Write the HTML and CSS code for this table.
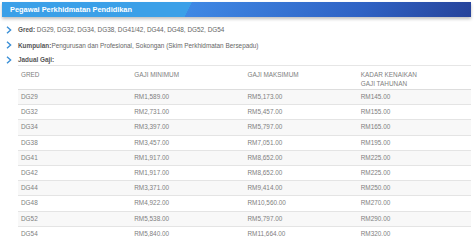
FILE: index.html
```html
<!DOCTYPE html>
<html>
<head>
<meta charset="utf-8">
<link rel="stylesheet" href="styles.css">
</head>
<body>
<div class="panel">
  <div class="title">Pegawai Perkhidmatan Pendidikan</div>
  <ul class="info">
    <li><svg class="chev" viewBox="0 0 6 8"><path d="M1 0.8 L4.6 4 L1 7.2" /></svg><b>Gred:</b>&nbsp;DG29, DG32, DG34, DG38, DG41/42, DG44, DG48, DG52, DG54</li>
    <li><svg class="chev" viewBox="0 0 6 8"><path d="M1 0.8 L4.6 4 L1 7.2" /></svg><b>Kumpulan:</b>Pengurusan dan Profesional, Sokongan (Skim Perkhidmatan Bersepadu)</li>
    <li class="last"><svg class="chev" viewBox="0 0 6 8"><path d="M1 0.8 L4.6 4 L1 7.2" /></svg><b>Jadual Gaji:</b></li>
  </ul>
  <table class="gaji">
    <thead>
      <tr><th>GRED</th><th>GAJI MINIMUM</th><th>GAJI MAKSIMUM</th><th>KADAR KENAIKAN<br>GAJI TAHUNAN</th></tr>
    </thead>
    <tbody>
      <tr><td>DG29</td><td>RM1,589.00</td><td>RM5,173.00</td><td>RM145.00</td></tr>
      <tr><td>DG32</td><td>RM2,731.00</td><td>RM5,457.00</td><td>RM155.00</td></tr>
      <tr><td>DG34</td><td>RM3,397.00</td><td>RM5,797.00</td><td>RM165.00</td></tr>
      <tr><td>DG38</td><td>RM3,457.00</td><td>RM7,051.00</td><td>RM195.00</td></tr>
      <tr><td>DG41</td><td>RM1,917.00</td><td>RM8,652.00</td><td>RM225.00</td></tr>
      <tr><td>DG42</td><td>RM1,917.00</td><td>RM8,652.00</td><td>RM225.00</td></tr>
      <tr><td>DG44</td><td>RM3,371.00</td><td>RM9,414.00</td><td>RM250.00</td></tr>
      <tr><td>DG48</td><td>RM4,922.00</td><td>RM10,560.00</td><td>RM270.00</td></tr>
      <tr><td>DG52</td><td>RM5,538.00</td><td>RM5,797.00</td><td>RM290.00</td></tr>
      <tr><td>DG54</td><td>RM5,840.00</td><td>RM11,664.00</td><td>RM320.00</td></tr>
    </tbody>
  </table>
</div>
</body>
</html>
```
FILE: styles.css
```css
html, body {
  margin: 0;
  padding: 0;
  background: #fff;
}
body {
  font-family: "Liberation Sans", Arial, sans-serif;
  color: #777;
}
.panel {
  padding: 2px 3px 0 2px;
}
.title {
  height: 15px;
  line-height: 15px;
  padding-left: 8px;
  color: #fff;
  font-weight: bold;
  font-size: 7.4px;
  background: linear-gradient(115deg, #3ba0e8 0 172px, #3f88e4 172px, #2f62c4 330px, #27439a 100%);
  box-shadow: 0 2px 3px rgba(0, 0, 0, 0.25);
}
.info {
  list-style: none;
  margin: 0;
  padding: 5px 0 0 0;
}
.info li {
  display: flex;
  align-items: center;
  height: 15.5px;
  font-size: 6.4px;
  color: #666;
  padding-left: 4px;
}
.info li.last {
  height: 12px;
  align-items: flex-start;
  padding-top: 3px;
  box-sizing: border-box;
}
.info b {
  color: #555;
}
.chev {
  width: 6px;
  height: 8px;
  margin-right: 6px;
  fill: none;
  stroke: #3a8fd6;
  stroke-width: 1.4;
}
.gaji {
  margin-left: 16px;
  width: calc(100% - 16px);
  border-collapse: collapse;
  table-layout: fixed;
  font-size: 6.4px;
  line-height: 8px;
  color: #808080;
}
.gaji th {
  text-align: left;
  font-weight: normal;
  vertical-align: top;
  padding: 4px 3px 1px 3px;
  line-height: 9px;
  border-top: 1px solid #e6e6e6;
  border-bottom: 1px solid #ddd;
}
.gaji td {
  height: 15.2px;
  box-sizing: border-box;
  padding: 0 3px;
  border-bottom: 1px solid #e4e4e4;
}
.gaji tbody tr:nth-child(odd) td {
  background: #f8f8f8;
}
.gaji tbody tr:last-child td {
  border-bottom: none;
}
```
